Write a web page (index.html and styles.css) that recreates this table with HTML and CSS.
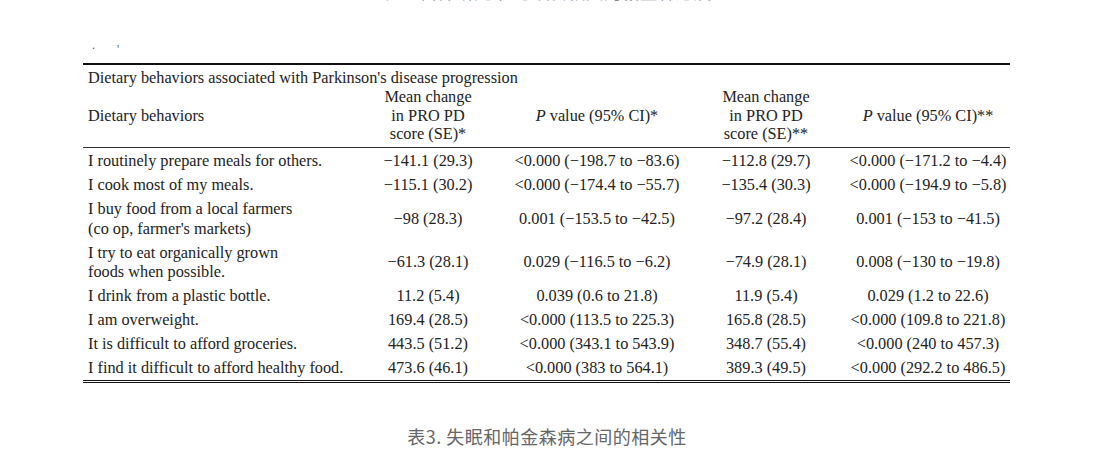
FILE: index.html
```html
<!DOCTYPE html>
<html lang="en">
<head>
<meta charset="utf-8">
<title>Dietary behaviors table</title>
<link rel="stylesheet" href="styles.css">
</head>
<body>
<div class="page">
  <div class="topcap">表2. 营养研究中 与饮食相关的帕金森进展</div>
  <div class="marks"><span class="dot">.</span><span class="tick">'</span></div>
  <div class="wrap">
    <table class="data">
      <colgroup>
        <col class="c1"><col class="c2"><col class="c3"><col class="c4"><col class="c5">
      </colgroup>
      <thead>
        <tr class="title"><td colspan="5">Dietary behaviors associated with Parkinson's disease progression</td></tr>
        <tr class="head">
          <th class="left">Dietary behaviors</th>
          <th>Mean change<br>in PRO PD<br>score (SE)*</th>
          <th><i>P</i> value (95% CI)*</th>
          <th>Mean change<br>in PRO PD<br>score (SE)**</th>
          <th><i>P</i> value (95% CI)**</th>
        </tr>
      </thead>
      <tbody>
        <tr><td class="left">I routinely prepare meals for others.</td><td>−141.1 (29.3)</td><td>&lt;0.000 (−198.7 to −83.6)</td><td>−112.8 (29.7)</td><td>&lt;0.000 (−171.2 to −4.4)</td></tr>
        <tr><td class="left">I cook most of my meals.</td><td>−115.1 (30.2)</td><td>&lt;0.000 (−174.4 to −55.7)</td><td>−135.4 (30.3)</td><td>&lt;0.000 (−194.9 to −5.8)</td></tr>
        <tr><td class="left">I buy food from a local farmers<br>(co op, farmer's markets)</td><td>−98 (28.3)</td><td>0.001 (−153.5 to −42.5)</td><td>−97.2 (28.4)</td><td>0.001 (−153 to −41.5)</td></tr>
        <tr><td class="left">I try to eat organically grown<br>foods when possible.</td><td>−61.3 (28.1)</td><td>0.029 (−116.5 to −6.2)</td><td>−74.9 (28.1)</td><td>0.008 (−130 to −19.8)</td></tr>
        <tr><td class="left">I drink from a plastic bottle.</td><td>11.2 (5.4)</td><td>0.039 (0.6 to 21.8)</td><td>11.9 (5.4)</td><td>0.029 (1.2 to 22.6)</td></tr>
        <tr><td class="left">I am overweight.</td><td>169.4 (28.5)</td><td>&lt;0.000 (113.5 to 225.3)</td><td>165.8 (28.5)</td><td>&lt;0.000 (109.8 to 221.8)</td></tr>
        <tr><td class="left">It is difficult to afford groceries.</td><td>443.5 (51.2)</td><td>&lt;0.000 (343.1 to 543.9)</td><td>348.7 (55.4)</td><td>&lt;0.000 (240 to 457.3)</td></tr>
        <tr><td class="left">I find it difficult to afford healthy food.</td><td>473.6 (46.1)</td><td>&lt;0.000 (383 to 564.1)</td><td>389.3 (49.5)</td><td>&lt;0.000 (292.2 to 486.5)</td></tr>
      </tbody>
    </table>
  </div>
  <div class="caption">表3. 失眠和帕金森病之间的相关性</div>
</div>
</body>
</html>
```

FILE: styles.css
```css
html, body {
  margin: 0;
  padding: 0;
  background: #ffffff;
}

.page {
  width: 1094px;
  height: 454px;
  overflow: hidden;
}

.topcap {
  margin-top: -19px;
  height: 20px;
  line-height: 20px;
  font-family: "Noto Sans CJK SC", sans-serif;
  font-size: 18px;
  color: #888888;
  text-align: center;
}

.marks {
  height: 62px;
  display: flex;
  align-items: flex-start;
  padding-left: 92px;
  font-family: "Liberation Serif", serif;
  font-size: 12px;
  line-height: 12px;
  color: #555555;
}

.marks .dot {
  margin-top: 38px;
}

.marks .tick {
  margin-left: 22px;
  margin-top: 42px;
}

.wrap {
  padding: 0 84px 0 83px;
}

.data {
  width: 927px;
  table-layout: fixed;
  border-collapse: collapse;
  font-family: "Liberation Serif", serif;
  font-size: 16.3px;
  color: #222222;
  border-top: 2px solid #111111;
  border-bottom: 3px double #111111;
}

.c1 { width: 265px; }
.c2 { width: 160px; }
.c3 { width: 178px; }
.c4 { width: 160px; }
.c5 { width: 164px; }

.data td, .data th {
  padding: 2.25px 0;
  line-height: 19.5px;
  text-align: center;
  font-weight: normal;
  vertical-align: middle;
  white-space: nowrap;
}

.data .left {
  text-align: left;
  padding-left: 5px;
}

.data .title td {
  text-align: left;
  padding: 3px 0 0 5px;
  line-height: 19px;
}

.data .head th {
  line-height: 18.5px;
  padding: 1px 0 3px;
  border-bottom: 1px solid #333333;
}

.data .head th.left {
  padding-left: 5px;
}

.data tbody tr:first-child td {
  padding-top: 3.5px;
}

.caption {
  margin-top: 41px;
  text-align: center;
  font-family: "Noto Sans CJK SC", sans-serif;
  font-size: 18px;
  line-height: 24px;
  color: #666666;
  letter-spacing: 0.5px;
}
```
